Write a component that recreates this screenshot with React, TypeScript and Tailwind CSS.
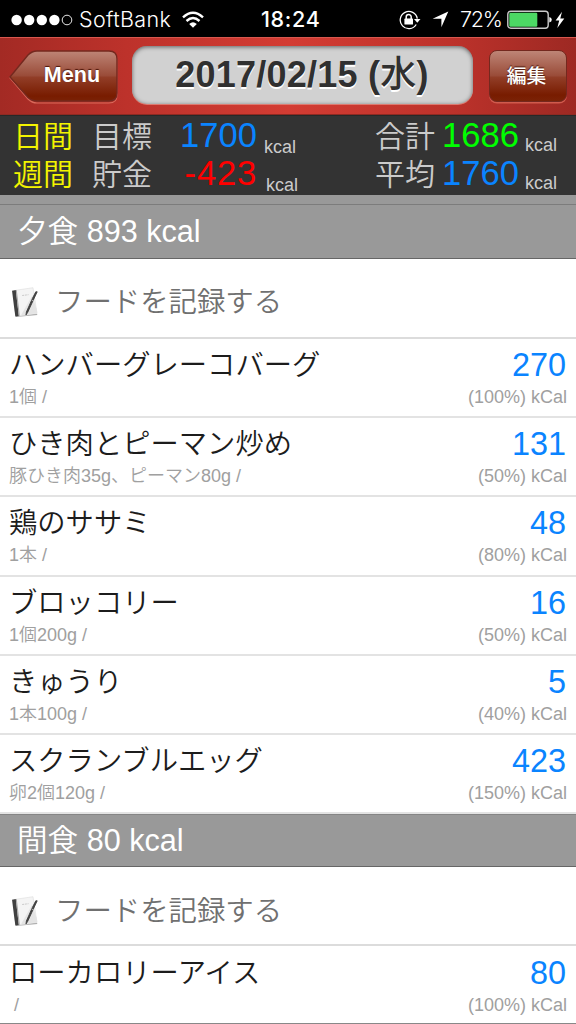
type Food = { name: string; detail: string; kcal: number; percent: number };

const dinner: Food[] = [
  { name: "ハンバーグレーコバーグ", detail: "1個 /", kcal: 270, percent: 100 },
  { name: "ひき肉とピーマン炒め", detail: "豚ひき肉35g、ピーマン80g /", kcal: 131, percent: 50 },
  { name: "鶏のササミ", detail: "1本 /", kcal: 48, percent: 80 },
  { name: "ブロッコリー", detail: "1個200g /", kcal: 16, percent: 50 },
  { name: "きゅうり", detail: "1本100g /", kcal: 5, percent: 40 },
  { name: "スクランブルエッグ", detail: "卵2個120g /", kcal: 423, percent: 150 },
];

const snacks: Food[] = [
  { name: "ローカロリーアイス", detail: "/", kcal: 80, percent: 100 },
];

function StatusBar() {
  return (
    <div className="flex h-[37px] shrink-0 items-center bg-black pt-[2px] font-['Inter','Liberation_Sans',sans-serif] text-[21.5px] text-white">
      <svg className="ml-[11px] shrink-0" width="62" height="12" viewBox="0 0 62 12">
        <circle cx="5.6" cy="6" r="5.2" fill="#fff" />
        <circle cx="18.2" cy="6" r="5.2" fill="#fff" />
        <circle cx="30.8" cy="6" r="5.2" fill="#fff" />
        <circle cx="43.4" cy="6" r="5.2" fill="#fff" />
        <circle cx="56" cy="6" r="4.8" fill="none" stroke="#fff" strokeWidth="0.9" />
      </svg>
      <span className="ml-[6px] w-[92px] shrink-0 whitespace-nowrap font-light tracking-[0.35px]">SoftBank</span>
      <svg className="ml-[11px] shrink-0" width="22" height="18" viewBox="0 0 22 18" fill="none" stroke="#fff" strokeWidth="2.4">
        <path d="M1 6.4 Q11 -2.8 21 6.4" />
        <path d="M4.5 10 Q11 4.2 17.5 10" />
        <path d="M11 16.8 L7.2 12.9 Q11 9.8 14.8 12.9 Z" fill="#fff" stroke="none" />
      </svg>
      <span className="ml-[57px] w-[64px] shrink-0 whitespace-nowrap font-medium tracking-[0.7px]">18:24</span>
      <svg className="ml-[74px] shrink-0" width="22" height="20" viewBox="0 0 22 20">
        <path d="M17.2 14.5 A8.6 8.6 0 1 1 18.3 8.6" fill="none" stroke="#fff" strokeWidth="1.3" />
        <path d="M15 9 H21.5 L18.3 12.7 Z" fill="#fff" />
        <rect x="5.4" y="8.6" width="8.6" height="6" rx="0.6" fill="#fff" />
        <path d="M7.2 9.3 V7 A2.5 2.5 0 0 1 12.2 7 V9.3" fill="none" stroke="#fff" strokeWidth="1.5" />
      </svg>
      <svg className="ml-[11px] shrink-0" width="17" height="17" viewBox="0 0 17 17">
        <path d="M16.3 0.6 L9.4 16.2 V7.8 H0.6 Z" fill="#fff" />
      </svg>
      <span className="ml-[11px] w-[44px] shrink-0 whitespace-nowrap font-light tracking-[-1.2px]">72%</span>
      <svg className="ml-[3px] shrink-0" width="58" height="20" viewBox="0 0 58 20">
        <rect x="0.8" y="1.2" width="40.4" height="17" rx="3" fill="none" stroke="#c9c9c9" strokeWidth="1.4" />
        <rect x="2.3" y="2.7" width="28" height="14" rx="1.2" fill="#4cd964" />
        <path d="M42.3 7 Q44.8 7.6 44.8 9.8 Q44.8 12 42.3 12.6 Z" fill="#fff" />
        <path d="M55 1.8 L48.6 10.6 H52.2 L50.3 18 L57.3 8.4 H53.3 Z" fill="#fff" />
      </svg>
    </div>
  );
}

function MenuButton() {
  return (
    <button className="relative h-[54px] w-[110px] shrink-0">
      <svg className="absolute inset-0" width="110" height="54" viewBox="0 0 110 54">
        <defs>
          <linearGradient id="menuFill" x1="0" y1="0" x2="0" y2="1">
            <stop offset="0" stopColor="#be8576" />
            <stop offset="0.5" stopColor="#994b38" />
            <stop offset="0.52" stopColor="#923e28" />
            <stop offset="0.9" stopColor="#781c00" />
            <stop offset="1" stopColor="#7a2206" />
          </linearGradient>
        </defs>
        <path d="M1 28 L19 6 Q23 2 28 2 H100 Q108 2 108 10 V45 Q108 53 100 53 H28 Q23 53 19 49 Z" fill="none" stroke="#d96a5b" strokeWidth="1.2" />
        <path d="M1 27 L19 5 Q23 1 28 1 H100 Q108 1 108 9 V43 Q108 51 100 51 H28 Q23 51 19 47.500 Z" fill="url(#menuFill)" stroke="#74281e" strokeWidth="1.4" />
      </svg>
      <span className="relative -top-[2px] block pl-[17px] text-center text-[21.6px] font-bold leading-[48px] text-white [text-shadow:0_-1px_1px_#4a1408]">
        Menu
      </span>
    </button>
  );
}

function Toolbar() {
  return (
    <div className="flex h-[78px] shrink-0 items-start border-b border-[#8f2a22] bg-[linear-gradient(90deg,#a32a24_0%,#bd322b_22%,#d33c33_50%,#bd322b_78%,#9d2923_100%)] pt-[12.500px] shadow-[inset_0_1px_0_#d8574e]">
      <div className="ml-[8.500px] flex">
        <MenuButton />
      </div>
      <div className="-mt-[4px] ml-[13px] h-[58px] w-[341px] shrink-0 rounded-[15px] bg-[#d1d1d1] text-center text-[36px] font-bold leading-[57px] text-[#303030] shadow-[inset_0_1px_4px_rgba(0,0,0,0.55),0_1px_0_#de7a70] [text-shadow:0_1.500px_0_#fff]">
        <span className="tracking-[0.22px]">2017/02/15 (<span className="font-medium">水</span>)</span>
      </div>
      <button className="ml-[16px] mt-[0.500px] h-[52px] w-[78px] shrink-0 rounded-[8px] border border-[#74281e] bg-[linear-gradient(180deg,#be8576_0%,#994b38_50%,#923e28_52%,#781c00_88%,#7a2206_100%)] text-[19.800px] font-bold leading-[49px] text-white shadow-[0_1.500px_0_#d05b4d] [text-shadow:0_-1px_1px_#4a1408]">
        <span className="relative -left-px font-medium">編集</span>
      </button>
    </div>
  );
}

type StatProps = { value: string; tone: string };

function SummaryRow(props: { period: string; goal: string; left: StatProps; leftGap: string; total: string; right: StatProps }) {
  return (
    <div className="flex h-[38px] items-baseline whitespace-nowrap text-[30px] leading-[38px] text-[#cbcbcb]">
      <span className="relative -top-px ml-[13px] w-[79px] font-[350] text-[#f4f400]">{props.period}</span>
      <span className="relative -top-px w-[62px] font-[350]">{props.goal}</span>
      <span className={`relative -top-px w-[103px] text-right text-[34.600px] ${props.left.tone}`}>{props.left.value}</span>
      <span className={`relative top-[5px] text-[18px] ${props.leftGap}`}>kcal</span>
      <span className="relative -top-px ml-auto w-[65px] font-[350]">{props.total}</span>
      <span className={`relative -top-px w-[79px] text-right text-[34.600px] ${props.right.tone}`}>{props.right.value}</span>
      <span className="relative top-[3px] ml-[6px] mr-[19px] text-[18px]">kcal</span>
    </div>
  );
}

function Notebook() {
  return (
    <svg className="ml-[11px] shrink-0" width="28" height="32" viewBox="0 0 28 32">
      <path d="M4.500 28.800 L25.500 26.600 L26.500 28 L5 30 Z" fill="#aaa" />
      <path d="M4.500 3.300 L22 0.700 L26 26.500 L8 29 Z" fill="#f4f4f4" stroke="#dedede" strokeWidth="0.6" />
      <path d="M21 9 L26 23 L26.200 26.200 L10 28.200 Z" fill="#e4e4e4" />
      <path d="M1 3.700 L4.800 3 L7.800 28.900 L4.300 29.500 Z" fill="#404040" />
      <path d="M4.800 3.200 L5.800 3 L8.800 28.700 L7.800 28.900 Z" fill="#aaa" />
      <path d="M11.200 8.500 L17.500 7.700" stroke="#c4c4c4" strokeWidth="0.9" strokeDasharray="2 0.700" />
      <path d="M26.200 4.800 L22.800 12 L16.600 25.500 L15 27.900 L15.400 25 L21.500 11.200 L24.800 4.800 Z" fill="#404040" stroke="#404040" strokeWidth="0.9" />
      <path d="M20.600 13 L22.800 14.100" stroke="#c8c8c8" strokeWidth="0.8" />
    </svg>
  );
}

function RecordRow({ size }: { size: string }) {
  return (
    <div className={`flex shrink-0 items-center border-b-2 border-[#dcdcdc] ${size}`}>
      <Notebook />
      <span className="relative -top-px ml-[16px] text-[28.400px] font-[350] leading-[40px] text-[#707070]">フードを記録する</span>
    </div>
  );
}

function FoodRow({ food, last = false }: { food: Food; last?: boolean }) {
  return (
    <div
      className={`flex shrink-0 justify-between pl-[9px] pr-[10px] ${
        last ? "h-[78px] border-b border-[#888] pt-[9px]" : "h-[79.200px] border-b-2 border-[#e3e3e3] pt-[8px]"
      }`}
    >
      <div className="flex flex-col">
        <span className="text-[28.300px] font-[350] leading-[36px] text-[#1c1c1c]">{food.name}</span>
        <span className={`mt-[3px] text-[18px] font-[350] leading-[22px] text-[#a0a0a0] ${last ? "pl-[5px]" : ""}`}>
          {food.detail}
        </span>
      </div>
      <div className="flex flex-col text-right">
        <span className="text-[32.400px] leading-[36px] text-[#0a84ff]">{food.kcal}</span>
        <span className="-mr-px mt-[3px] text-[18px] leading-[22px] text-[#a0a0a0]">({food.percent}%) kCal</span>
      </div>
    </div>
  );
}

export default function App() {
  return (
    <div className="flex h-[1024px] w-[576px] flex-col overflow-hidden bg-white font-['Liberation_Sans','Noto_Sans_CJK_JP',sans-serif]">
      <StatusBar />
      <Toolbar />
      <div className="h-[80px] shrink-0 border-t border-[#282828] bg-[#333] pt-px">
        <SummaryRow
          period="日間"
          goal="目標"
          left={{ value: "1700", tone: "text-[#0a84ff]" }}
          leftGap="ml-[7px]"
          total="合計"
          right={{ value: "1686", tone: "text-[#00ff00]" }}
        />
        <SummaryRow
          period="週間"
          goal="貯金"
          left={{ value: "-423", tone: "text-[#ff0000] tracking-[0.8px] -mr-[1px] pl-[1px]" }}
          leftGap="ml-[10px]"
          total="平均"
          right={{ value: "1760", tone: "text-[#0a84ff]" }}
        />
      </div>
      <div className="h-[9px] shrink-0 bg-[#999]" />
      <div className="h-[55px] shrink-0 border-b border-t border-b-[#666] border-t-[#7c7c7c] bg-[#999] pl-[17px] text-[30.600px] font-[350] leading-[53px] text-white">
        夕食 893 kcal
      </div>
      <RecordRow size="h-[80px] pt-[10px]" />
      {dinner.map((food) => (
        <FoodRow key={food.name} food={food} />
      ))}
      <div className="h-[53px] shrink-0 border-b border-t border-b-[#666] border-t-[#858585] bg-[#999] pl-[17px] text-[30.600px] font-[350] leading-[50px] text-white">
        間食 80 kcal
      </div>
      <RecordRow size="h-[79px] pt-[12px]" />
      {snacks.map((food) => (
        <FoodRow key={food.name} food={food} last />
      ))}
    </div>
  );
}
